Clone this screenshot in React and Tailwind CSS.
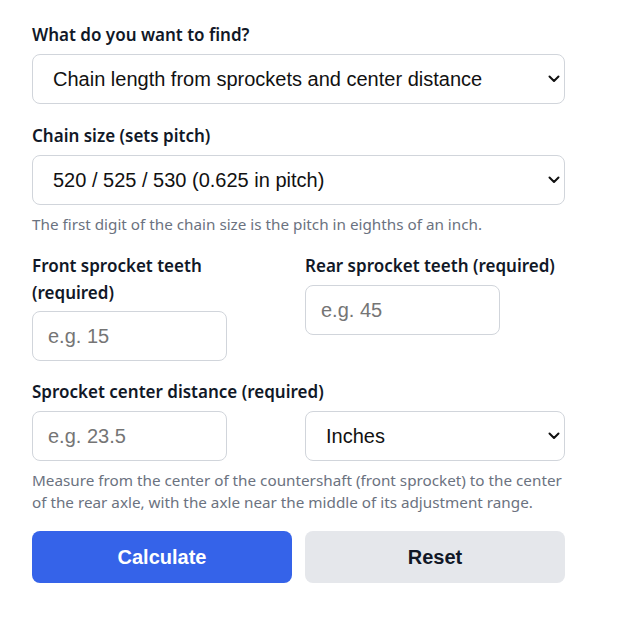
import React from "react";

const labelCls = "block text-[17px] leading-[27px] font-semibold text-[#111827] [font-family:'Noto_Sans',sans-serif]";
const ctrl = "h-[50px] rounded-lg border border-[#d1d5db] bg-white text-[20px] text-[#111] [font-family:'Liberation_Sans',Arial,sans-serif] outline-none";
const help = "text-[15.25px] leading-[22px] text-[#6b7280] [font-family:'Noto_Sans',sans-serif]";

function Select({ children, className = "" }) {
  return (
    <div className={"relative " + className}>
      <select className={ctrl + " w-full appearance-none pl-5 pr-10"}>{children}</select>
      <svg className="pointer-events-none absolute right-[5px] top-1/2 -translate-y-1/2" width="12" height="8" viewBox="0 0 12 8">
        <path d="M1.5 1.5 L6 6 L10.5 1.5" fill="none" stroke="#111" strokeWidth="2" strokeLinecap="round" strokeLinejoin="round" />
      </svg>
    </div>
  );
}

export default function App() {
  return (
    <div className="bg-white min-h-[617px] w-[622px]">
      <div className="w-[533px] ml-8 pt-[21px] flex flex-col">
        <label className={labelCls}>What do you want to find?</label>
        <Select className="mt-[6px]">
          <option>Chain length from sprockets and center distance</option>
        </Select>

        <label className={labelCls + " mt-[18px]"}>Chain size (sets pitch)</label>
        <Select className="mt-[6px]">
          <option>520 / 525 / 530 (0.625 in pitch)</option>
        </Select>
        <p className={help + " mt-[8px]"}>The first digit of the chain size is the pitch in eighths of an inch.</p>

        <div className="grid grid-cols-2 gap-[13px] mt-[17px]">
          <div className="flex flex-col">
            <label className={labelCls}>Front sprocket teeth<br />(required)</label>
            <input className={ctrl + " w-[195px] px-[15px] mt-[5px] placeholder:text-[#757575]"} placeholder="e.g. 15" />
          </div>
          <div className="flex flex-col">
            <label className={labelCls}>Rear sprocket teeth (required)</label>
            <input className={ctrl + " w-[195px] px-[15px] mt-[6px] placeholder:text-[#757575]"} placeholder="e.g. 45" />
          </div>
        </div>

        <label className={labelCls + " mt-[17px]"}>Sprocket center distance (required)</label>
        <div className="grid grid-cols-2 gap-[13px] mt-[6px]">
          <input className={ctrl + " w-[195px] px-[15px] placeholder:text-[#757575]"} placeholder="e.g. 23.5" />
          <Select>
            <option>Inches</option>
          </Select>
        </div>
        <p className={help + " mt-[8px]"}>Measure from the center of the countershaft (front sprocket) to the center of the rear axle, with the axle near the middle of its adjustment range.</p>

        <div className="grid grid-cols-2 gap-[13px] mt-[18px]">
          <button className="h-[52px] rounded-lg bg-[#3563e9] text-white text-[20px] font-bold [font-family:'Liberation_Sans',Arial,sans-serif]">Calculate</button>
          <button className="h-[52px] rounded-lg bg-[#e5e7eb] text-[#111827] text-[20px] font-bold [font-family:'Liberation_Sans',Arial,sans-serif]">Reset</button>
        </div>
      </div>
    </div>
  );
}
